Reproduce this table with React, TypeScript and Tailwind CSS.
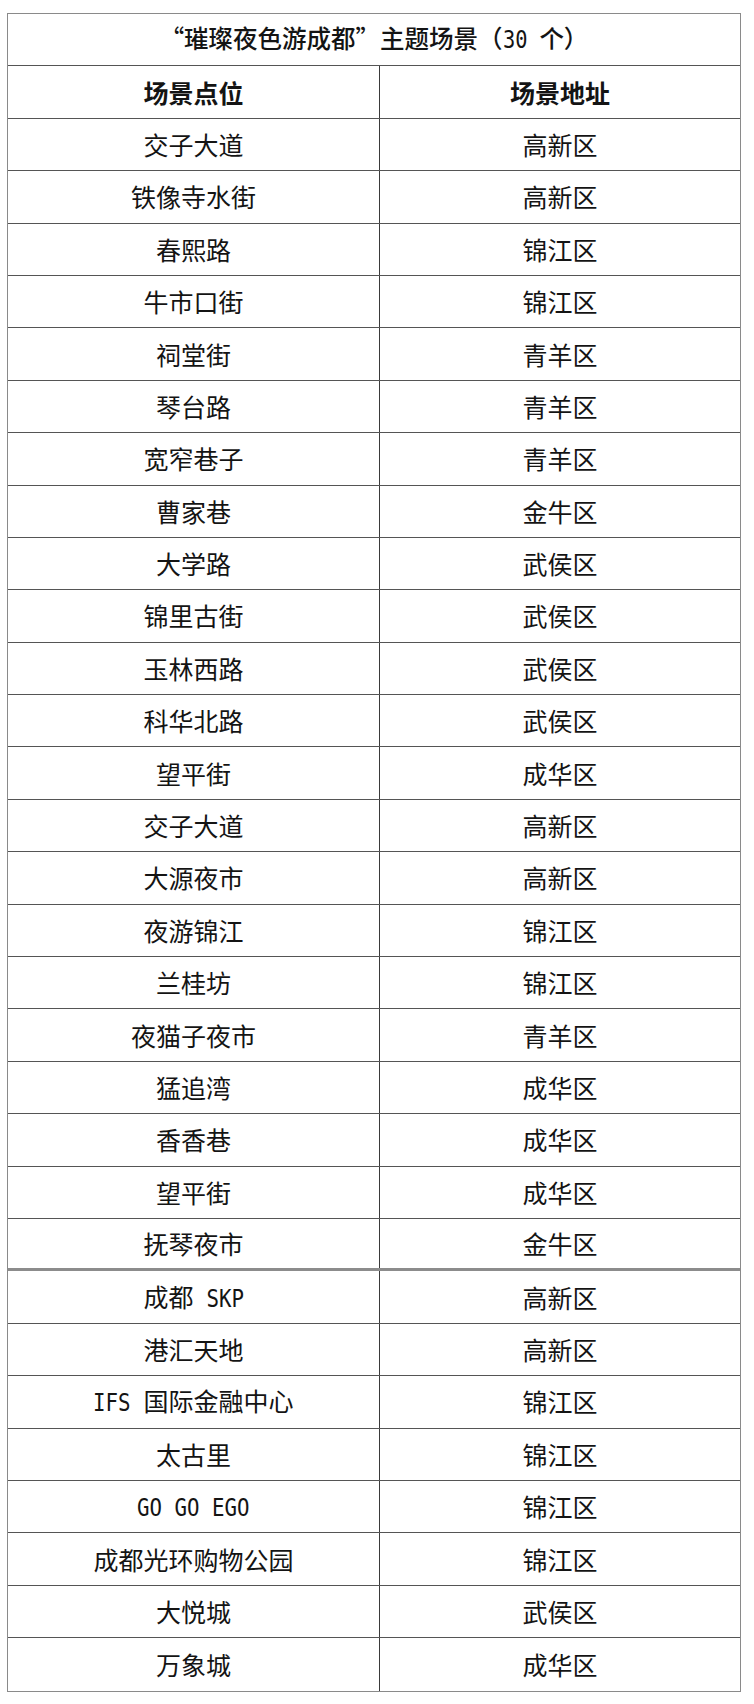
import React from 'react';

type Row = [string, string];

const rows: Row[] = [
  ['交子大道', '高新区'],
  ['铁像寺水街', '高新区'],
  ['春熙路', '锦江区'],
  ['牛市口街', '锦江区'],
  ['祠堂街', '青羊区'],
  ['琴台路', '青羊区'],
  ['宽窄巷子', '青羊区'],
  ['曹家巷', '金牛区'],
  ['大学路', '武侯区'],
  ['锦里古街', '武侯区'],
  ['玉林西路', '武侯区'],
  ['科华北路', '武侯区'],
  ['望平街', '成华区'],
  ['交子大道', '高新区'],
  ['大源夜市', '高新区'],
  ['夜游锦江', '锦江区'],
  ['兰桂坊', '锦江区'],
  ['夜猫子夜市', '青羊区'],
  ['猛追湾', '成华区'],
  ['香香巷', '成华区'],
  ['望平街', '成华区'],
  ['抚琴夜市', '金牛区'],
  ['成都 SKP', '高新区'],
  ['港汇天地', '高新区'],
  ['IFS 国际金融中心', '锦江区'],
  ['太古里', '锦江区'],
  ['GO GO EGO', '锦江区'],
  ['成都光环购物公园', '锦江区'],
  ['大悦城', '武侯区'],
  ['万象城', '成华区'],
];

// half-width latin, like the narrow latin of the original table font
const Latin = ({ text }: { text: string }) => (
  <span className="inline-block text-left" style={{ width: `${text.length * 0.5}em` }}>
    <span className="inline-block origin-left scale-x-[0.83] whitespace-pre font-['DejaVu_Sans_Mono']">
      {text}
    </span>
  </span>
);

const Cell = ({ text }: { text: string }) => {
  const parts = text.split(/([A-Za-z0-9 ]+)/).filter(Boolean);
  return (
    <span className="whitespace-nowrap">
      {parts.map((p, i) =>
        /^[A-Za-z0-9 ]+$/.test(p) ? <Latin key={i} text={p} /> : <span key={i}>{p}</span>
      )}
    </span>
  );
};

const TableRow = ({ left, right, bold, sep, last }: { left: string; right: string; bold?: boolean; sep?: boolean; last?: boolean }) => (
  <div
    className={`flex h-[52.4px] ${
      last ? '' : sep ? 'border-b-[3px] border-[#8c8c8c]' : 'border-b border-[#555]'
    } ${bold ? 'font-bold' : 'font-normal'}`}
  >
    <div className="flex w-[372px] items-center justify-center border-r border-[#3a3a3a]">
      <Cell text={left} />
    </div>
    <div className="flex flex-1 items-center justify-center">
      <Cell text={right} />
    </div>
  </div>
);

export default function App() {
  return (
    <div className="min-h-[1704px] bg-white pt-[13px] pl-[7px] text-[25px] leading-none text-[#141414] font-['Noto_Sans_CJK_SC',sans-serif]">
      <div className="w-[734px] border border-[#8a8a8a]">
        <div className="flex h-[52.4px] items-center justify-center border-b border-[#555] text-[24.5px] font-medium">
          <Cell text="“璀璨夜色游成都”主题场景（30 个）" />
        </div>
        <TableRow left="场景点位" right="场景地址" bold />
        {rows.map(([l, r], i) => (
          <TableRow key={i} left={l} right={r} sep={i === 21} last={i === rows.length - 1} />
        ))}
      </div>
    </div>
  );
}
